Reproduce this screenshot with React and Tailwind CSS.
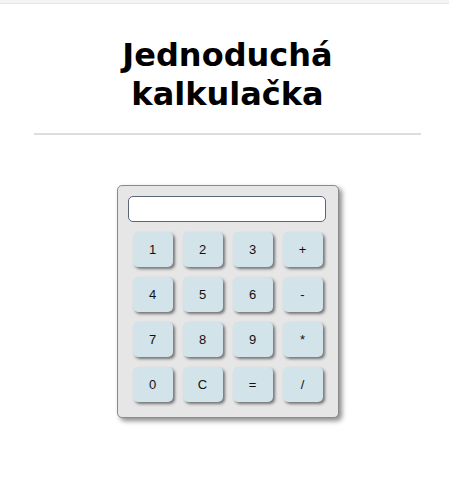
const keys = ['1', '2', '3', '+', '4', '5', '6', '-', '7', '8', '9', '*', '0', 'C', '=', '/'];

export default function App() {
  return (
    <div className="min-h-[501px] bg-white">
      <div className="h-[4px] border-b border-[#e6e6e6] bg-[#f4f4f4]" />
      <div className="pl-[34px] pr-[28px]">
        <h1 className="mt-[32px] text-center text-[32px] font-bold leading-[39px] text-black [font-family:'DejaVu_Sans',sans-serif]">
          Jednoduchá
          <br />
          kalkulačka
        </h1>
        <hr className="mt-[19px] border-t-2 border-[#dddddd]" />
        <div className="mx-auto mt-[50px] w-[222px] rounded-[5px] border border-[#8a8a8a] bg-[#e6e6e6] p-[10px] shadow-[3px_3px_5px_rgba(0,0,0,0.45)]">
          <input
            type="text"
            className="mb-[5px] block h-[26px] w-[198px] rounded-[5px] border border-[#5a6577] bg-white px-1 outline-none"
          />
          <div className="grid grid-cols-4">
            {keys.map((k) => (
              <button
                key={k}
                className="m-[5px] h-[35px] w-[40px] rounded-[5px] bg-[#d2e3ea] text-[13px] text-[#111] shadow-[2px_2px_3px_rgba(0,0,0,0.5)] [font-family:'Liberation_Sans',Arial,sans-serif]"
              >
                {k}
              </button>
            ))}
          </div>
        </div>
      </div>
    </div>
  );
}
